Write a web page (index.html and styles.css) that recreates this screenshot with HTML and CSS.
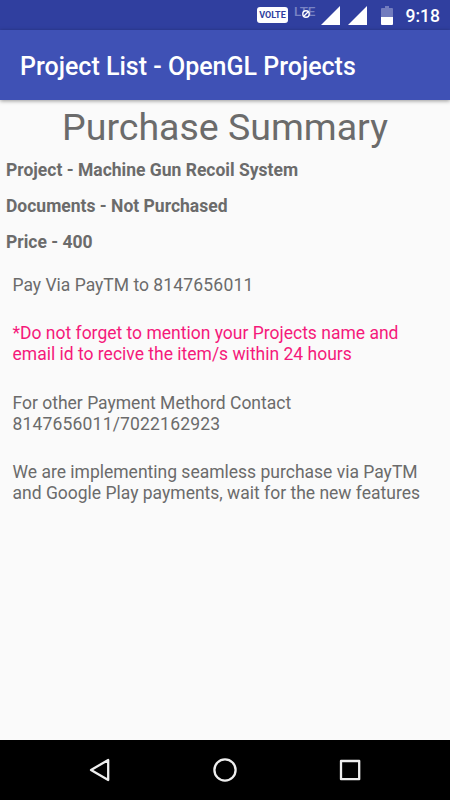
FILE: index.html
```
<!DOCTYPE html>
<html lang="en">
<head>
    <meta charset="UTF-8">
    <meta name="viewport" content="width=device-width, initial-scale=1.0">
    <title>Purchase Summary</title>
    <link rel="stylesheet" href="styles.css">
</head>
<body>
    <div class="screen">
        <!-- Status bar -->
        <div class="status-bar">
            <div class="volte">VOLTE</div>
            <div class="lte">
                LTE
                <svg class="lte-off" width="10" height="10" viewBox="0 0 10 10">
                    <circle cx="5" cy="5" r="3.2" fill="#303f9f" stroke="#fff" stroke-width="1.4"/>
                    <path d="M3 7L7 3" stroke="#fff" stroke-width="1.3"/>
                </svg>
            </div>
            <svg class="signal" width="19" height="19" viewBox="0 0 19 19"><path d="M0 19L19 0V19Z" fill="#fff"/></svg>
            <svg class="signal" width="19" height="19" viewBox="0 0 19 19"><path d="M0 19L19 0V19Z" fill="#fff"/></svg>
            <svg class="battery" width="12" height="19" viewBox="0 0 12 19">
                <path d="M0 11V3Q0 2 1 2H4V0H8V2H11Q12 2 12 3V11Z" fill="#fff" fill-opacity=".32"/>
                <path d="M0 11H12V18Q12 19 11 19H1Q0 19 0 18Z" fill="#fff"/>
            </svg>
            <div class="clock">9:18</div>
        </div>

        <!-- App bar -->
        <div class="app-bar">Project List - OpenGL Projects</div>

        <!-- Summary -->
        <div class="content">
            <h1 class="title">Purchase Summary</h1>
            <div class="details">
                <div>Project - Machine Gun Recoil System</div>
                <div>Documents - Not Purchased</div>
                <div>Price - 400</div>
            </div>
            <div class="notes">
                <p>Pay Via PayTM to <span class="phone">8147656011</span></p>
                <p class="warning">*Do not forget to mention your Projects name and<br>email id to recive the item/s within 24 hours</p>
                <p>For other Payment Methord Contact<br><span class="phone">8147656011/7022162923</span></p>
                <p>We are implementing seamless purchase via PayTM<br>and Google Play payments, wait for the new features</p>
            </div>
        </div>

        <!-- Navigation bar -->
        <div class="nav-bar">
            <svg width="26" height="26" viewBox="0 0 26 26"><path d="M4 13L21.2 3V23Z"/></svg>
            <svg width="26" height="26" viewBox="0 0 26 26"><circle cx="13" cy="13" r="10.6"/></svg>
            <svg width="26" height="26" viewBox="0 0 26 26"><rect x="4" y="4" width="18.2" height="18.2"/></svg>
        </div>
    </div>
</body>
</html>
```

FILE: styles.css
```
body {
    margin: 0;
    font-family: Roboto, sans-serif;
    background: #fafafa;
    color: #6b6b6b;
    overflow: hidden;
}

.screen {
    display: flex;
    flex-direction: column;
    height: 100vh;
}

/* Status bar */
.status-bar {
    display: flex;
    align-items: flex-start;
    box-sizing: border-box;
    height: 30px;
    padding: 6px 10px 0 257px;
    background: #303f9f;
    color: #fff;
}

.volte {
    box-sizing: border-box;
    width: 31px;
    height: 16px;
    margin-top: 1px;
    border-radius: 3px;
    background: #fff;
    color: #303f9f;
    font-size: 9px;
    font-weight: 700;
    line-height: 17px;
    text-align: center;
}

.lte {
    position: relative;
    width: 22px;
    margin: -2px 0 0 6px;
    color: #7984c4;
    font-size: 13.5px;
    font-weight: 500;
    line-height: 14px;
}

.lte-off {
    position: absolute;
    left: 7px;
    top: 5px;
}

.signal {
    margin-left: 5px;
}

.signal + .signal {
    margin-left: 8px;
}

.battery {
    margin-left: 14px;
}

.clock {
    margin-left: auto;
    font-size: 17.5px;
    font-weight: 500;
    line-height: 20px;
}

/* App bar */
.app-bar {
    position: relative;
    height: 70px;
    padding-left: 20px;
    background: #3f51b5;
    box-shadow: 0 1px 4px rgba(0, 0, 0, 0.4);
    color: #fff;
    font-size: 25px;
    font-weight: 500;
    line-height: 73px;
}

.content {
    flex: 1;
}

.title {
    margin: 5px 0 0;
    font-size: 37.5px;
    font-weight: 400;
    line-height: 44px;
    text-align: center;
}

.details {
    display: flex;
    flex-direction: column;
    gap: 16px;
    padding: 11px 6px 0;
    font-size: 17.5px;
    font-weight: 700;
    line-height: 20px;
}

.notes {
    display: flex;
    flex-direction: column;
    gap: 27px;
    padding: 23px 12.5px 0;
    font-size: 17.5px;
    line-height: 21px;
    white-space: nowrap;
}

.notes p {
    margin: 0;
}

.notes .warning {
    margin-bottom: 1px;
    color: #f5197a;
}

.phone {
    letter-spacing: 0.18px;
}

/* Navigation bar */
.nav-bar {
    display: flex;
    justify-content: center;
    align-items: center;
    gap: 99px;
    height: 60px;
    background: #000;
}

.nav-bar svg {
    fill: none;
    stroke: #eee;
    stroke-width: 2.3;
    stroke-linejoin: round;
}
```
